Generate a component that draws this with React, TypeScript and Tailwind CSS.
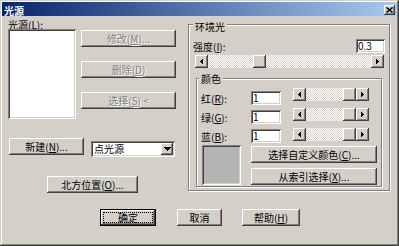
import React from "react";

const RAISED =
  "bg-[#d4d0c8] [box-shadow:inset_-1px_-1px_#404040,inset_1px_1px_#fff,inset_-2px_-2px_#808080]";
const SUNKEN =
  "bg-white [box-shadow:inset_1px_1px_#808080,inset_-1px_-1px_#fff,inset_2px_2px_#404040,inset_-2px_-2px_#d4d0c8]";
const ETCHED = "border border-[#808080] [box-shadow:inset_1px_1px_#fff,1px_1px_#fff]";
const CHECKER =
  "[background-image:repeating-conic-gradient(#fff_0_25%,#d4d0c8_0_50%)] [background-size:2px_2px]";

function U({ c }: { c: string }) {
  return <span className="underline decoration-1 underline-offset-[1px]">{c}</span>;
}

function Btn({
  w,
  children,
  disabled,
  className = "",
}: {
  w: string;
  children: React.ReactNode;
  disabled?: boolean;
  className?: string;
}) {
  return (
    <div
      className={`${RAISED} h-[17px] ${w} shrink-0 flex items-center justify-center leading-[10px] whitespace-nowrap ${
        disabled ? "text-[#808080] [text-shadow:1px_1px_#fff]" : "text-black"
      } ${className}`}
    >
      {children}
    </div>
  );
}

function Tri({ dir }: { dir: "l" | "r" | "d" }) {
  if (dir === "l")
    return (
      <svg width="3" height="5" viewBox="0 0 3 5" shapeRendering="crispEdges">
        <rect x="0" y="2" width="1" height="1" />
        <rect x="1" y="1" width="1" height="3" />
        <rect x="2" y="0" width="1" height="5" />
      </svg>
    );
  if (dir === "r")
    return (
      <svg width="3" height="5" viewBox="0 0 3 5" shapeRendering="crispEdges">
        <rect x="0" y="0" width="1" height="5" />
        <rect x="1" y="1" width="1" height="3" />
        <rect x="2" y="2" width="1" height="1" />
      </svg>
    );
  return (
    <svg width="7" height="4" viewBox="0 0 7 4" shapeRendering="crispEdges">
      <rect x="0" y="0" width="7" height="1" />
      <rect x="1" y="1" width="5" height="1" />
      <rect x="2" y="2" width="3" height="1" />
      <rect x="3" y="3" width="1" height="1" />
    </svg>
  );
}

function ArrowBtn({ dir }: { dir: "l" | "r" }) {
  return (
    <div className={`${RAISED} w-[13px] h-[13px] shrink-0 flex items-center justify-center`}>
      <Tri dir={dir} />
    </div>
  );
}

function HScroll({ className, trackClass }: { className: string; trackClass: string }) {
  return (
    <div className={`flex h-[13px] shrink-0 ${className}`}>
      <ArrowBtn dir="l" />
      <div className={`flex-1 flex ${CHECKER} ${trackClass}`}>
        <div className={`${RAISED} w-[13px] h-[13px]`} />
      </div>
      <ArrowBtn dir="r" />
    </div>
  );
}

function ColorRow({ label, m }: { label: string; m: string }) {
  return (
    <div className="flex items-center h-[14px]">
      <span className="ml-[4px] w-[50px] leading-[9px] whitespace-nowrap">
        {label}(<U c={m} />):
      </span>
      <div className={`${SUNKEN} w-[30px] h-[14px] pl-[2px] flex items-center`}>1</div>
    </div>
  );
}

export default function App() {
  return (
    <div
      className={`w-[399px] h-[246px] bg-[#d4d0c8] p-[2px] flex flex-col text-[10px] leading-[10px] text-black font-['Noto_Sans_CJK_SC',sans-serif] [box-shadow:inset_-1px_-1px_#404040,inset_1px_1px_#d4d0c8,inset_-2px_-2px_#808080,inset_2px_2px_#fff]`}
    >
      {/* title bar */}
      <div className="h-[14px] shrink-0 flex items-start [background-image:linear-gradient(to_right,#0a246a,#a6caf0)]">
        <span className="ml-[2px] mt-[4px] font-bold text-white leading-[9px]">光源</span>
        <div className="flex-1" />
        <div className={`${RAISED} w-[11px] h-[10px] mt-[3px] mr-[2px] flex items-center justify-center`}>
          <svg width="7" height="6" viewBox="0 0 7 6">
            <path d="M0.5 0.5 L6.5 5.5 M6.5 0.5 L0.5 5.5" stroke="#000" strokeWidth="1.5" />
          </svg>
        </div>
      </div>

      {/* body */}
      <div className="flex pl-[6px]">
        {/* left column */}
        <div className="w-[168px] flex flex-col">
          <div className="mt-[4px] leading-[9px] h-[9px] whitespace-nowrap">
            光源(<U c="L" />):
          </div>
          <div className="flex">
            <div className={`${SUNKEN} w-[68px] h-[90px]`} />
            <div className="ml-[5px] mt-[1px] flex flex-col gap-[14px]">
              <Btn w="w-[95px]" disabled>
                修改(<U c="M" />)...
              </Btn>
              <Btn w="w-[95px]" disabled>
                删除(<U c="D" />)
              </Btn>
              <Btn w="w-[95px]" disabled>
                选择(<U c="S" />) &lt;
              </Btn>
            </div>
          </div>
          <div className="flex items-start mt-[19px]">
            <Btn w="w-[75px]" className="ml-[1px]">
              新建(<U c="N" />)...
            </Btn>
            <div className={`${SUNKEN} w-[84px] h-[16px] ml-[7px] mt-[3px] flex items-center`}>
              <span className="flex-1 pl-[3px] leading-[10px]">点光源</span>
              <div className={`${RAISED} w-[12px] h-[12px] mr-[2px] flex items-center justify-center`}>
                <Tri dir="d" />
              </div>
            </div>
          </div>
          <Btn w="w-[91px]" className="ml-[39px] mt-[19px]">
            北方位置(<U c="O" />)...
          </Btn>
        </div>

        {/* ambient light group */}
        <div className={`${ETCHED} ml-[12px] mt-[8px] w-[202px] h-[167px] flex flex-col`}>
          <div className="-mt-[3px] ml-[4px] px-[2px] bg-[#d4d0c8] self-start leading-[9px]">环境光</div>
          <div className="flex justify-between items-start mt-[8px]">
            <div className="ml-[4px] mt-[3px] leading-[9px] whitespace-nowrap">
              强度(<U c="I" />):
            </div>
            <div className={`${SUNKEN} w-[29px] h-[14px] mr-[4px] pl-[2px] flex items-center`}>0.3</div>
          </div>
          <HScroll className="ml-[6px] mt-[2px] w-[189px]" trackClass="pl-[45px]" />

          {/* colour group */}
          <div className={`${ETCHED} ml-[7px] mt-[10px] w-[186px] h-[109px] flex flex-col`}>
            <div className="-mt-[5px] ml-[2px] px-[2px] bg-[#d4d0c8] self-start leading-[9px]">颜色</div>
            <div className="flex mt-[5px]">
              <div className="flex flex-col gap-[5px] mt-[3px]">
                <ColorRow label="红" m="R" />
                <ColorRow label="绿" m="G" />
                <ColorRow label="蓝" m="B" />
              </div>
              <div className="flex flex-col gap-[7px] ml-[12px]">
                <HScroll className="w-[76px]" trackClass="justify-end" />
                <HScroll className="w-[76px]" trackClass="justify-end" />
                <HScroll className="w-[76px]" trackClass="justify-end" />
              </div>
            </div>
            <div className="flex items-start mt-[2px]">
              <div
                className={`ml-[5px] w-[39px] h-[40px] bg-[#b4b4b4] [box-shadow:inset_1px_1px_#808080,inset_-1px_-1px_#fff,inset_2px_2px_#404040,inset_-2px_-2px_#d4d0c8]`}
              />
              <div className="ml-[10px] mt-[1px] flex flex-col gap-[5px]">
                <Btn w="w-[126px]">
                  选择自定义颜色(<U c="C" />)...
                </Btn>
                <Btn w="w-[126px]">
                  从索引选择(<U c="X" />)...
                </Btn>
              </div>
            </div>
          </div>
        </div>
      </div>

      {/* bottom buttons */}
      <div className="flex items-start pl-[98px] mt-[16px]">
        <div className="w-[56px] h-[17px] border border-black flex">
          <div className={`${RAISED} flex-1 p-[2px] flex`}>
            <div className="flex-1 border border-dotted border-black flex items-center justify-center leading-[10px]">
              确定
            </div>
          </div>
        </div>
        <Btn w="w-[45px]" className="ml-[21px]">
          取消
        </Btn>
        <Btn w="w-[58px]" className="ml-[20px]">
          帮助(<U c="H" />)
        </Btn>
      </div>
    </div>
  );
}
